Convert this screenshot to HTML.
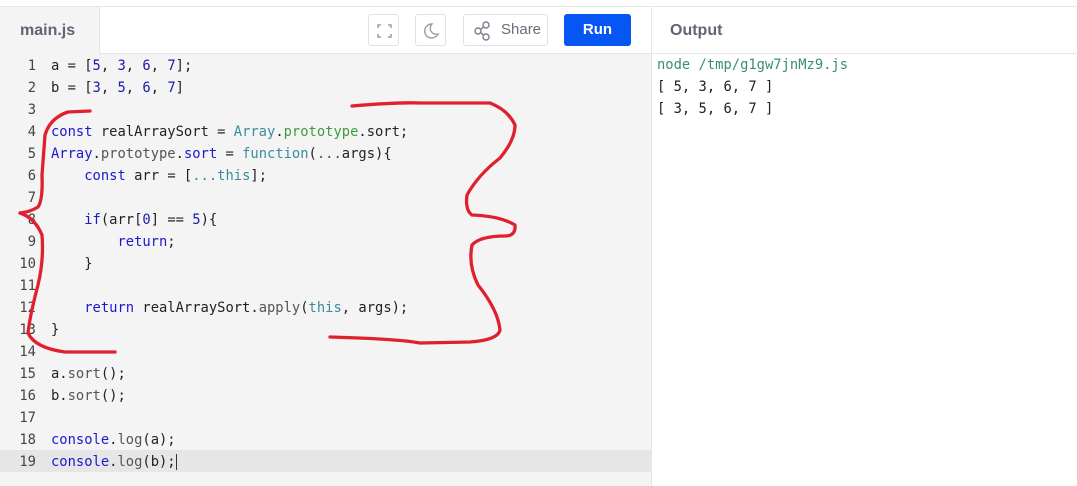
<!DOCTYPE html>
<html><head><meta charset="utf-8"><style>
*{margin:0;padding:0;box-sizing:border-box}
body{width:1077px;height:486px;overflow:hidden;background:#fff;font-family:"Liberation Sans",sans-serif;position:relative}
.top{position:absolute;left:0;top:6px;width:1077px;height:1px;background:#e4e6ec}
.tab{position:absolute;left:0;top:7px;width:99px;height:479px;background:#f4f4f4}
.tab span{position:absolute;left:20px;top:15px;font-size:16px;font-weight:bold;color:#606474}
.tb{position:absolute;left:99px;top:7px;width:552px;height:47px;background:#fff;border-left:1px solid #e4e6ec;border-bottom:1px solid #e4e6ec}
.editor{position:absolute;left:0;top:54px;width:651px;height:432px;background:#f4f4f4}
.div{position:absolute;left:651px;top:7px;width:1px;height:479px;background:#e4e6ec}
.outh{position:absolute;left:652px;top:7px;width:425px;height:47px;border-bottom:1px solid #e4e6ec}
.outh span{position:absolute;left:18px;top:15px;font-size:16px;font-weight:bold;color:#606474}
.btn{position:absolute;top:14px;height:32px;border:1px solid #dfe1e6;border-radius:3px;background:#fff}
.run{position:absolute;left:564px;top:14px;width:67px;height:32px;background:#0556f3;border-radius:3px;color:#fff;font-weight:bold;font-size:15px;text-align:center;line-height:32px}
.code{position:absolute;left:0;top:55px;font-family:"DejaVu Sans Mono","Liberation Mono",monospace;font-size:13.8px;line-height:22px;color:#222}
.ln{position:absolute;left:0;width:36px;text-align:right;color:#444}
.cl{position:absolute;left:51px;white-space:pre}
.k{color:#1a1acc}.n{color:#1a1aa6}.t{color:#3a8c9c}.g{color:#3c9c3c}.p{color:#555}
.hl{position:absolute;left:0;top:450px;width:651px;height:22px;background:#e6e6e6}
.out{position:absolute;left:657px;top:54px;font-family:"DejaVu Sans Mono","Liberation Mono",monospace;font-size:13.8px;line-height:22px;color:#222;white-space:pre}
</style></head><body>
<div class="top"></div>
<div class="tab"><span>main.js</span></div>
<div class="editor"></div>
<div class="hl"></div>
<div class="tb"></div>
<div class="div"></div>
<div class="outh"><span>Output</span></div>
<div class="btn" style="left:368px;width:31px"><svg width="31" height="32" viewBox="0 0 31 32"><path d="M9 13v-3h3M19 10h3v3M22 19v3h-3M12 22h-3v-3" fill="none" stroke="#9a9ea8" stroke-width="1.5"/></svg></div>
<div class="btn" style="left:415px;width:31px"><svg width="31" height="32" viewBox="0 0 31 32"><path d="M16 9a7 7 0 1 0 6 10a6 6 0 0 1-6-10z" fill="none" stroke="#9a9ea8" stroke-width="1.4"/></svg></div>
<div class="btn" style="left:463px;width:85px"><svg width="30" height="32" viewBox="0 0 30 32" style="position:absolute;left:4px;top:0"><circle cx="10" cy="16" r="3" fill="none" stroke="#7a7e8a" stroke-width="1.4"/><circle cx="18" cy="10" r="3" fill="none" stroke="#7a7e8a" stroke-width="1.4"/><circle cx="18" cy="22" r="3" fill="none" stroke="#7a7e8a" stroke-width="1.4"/><path d="M12.5 14.5l3-2.5M12.5 17.5l3 2.5" stroke="#7a7e8a" stroke-width="1.4"/></svg><span style="position:absolute;left:37px;top:6px;font-size:15px;color:#6a6e7a">Share</span></div>
<div class="run">Run</div>
<div class="code">
<div class="ln" style="top:0">1</div><div class="cl" style="top:0">a = [<span class="n">5</span>, <span class="n">3</span>, <span class="n">6</span>, <span class="n">7</span>];</div>
<div class="ln" style="top:22px">2</div><div class="cl" style="top:22px">b = [<span class="n">3</span>, <span class="n">5</span>, <span class="n">6</span>, <span class="n">7</span>]</div>
<div class="ln" style="top:44px">3</div>
<div class="ln" style="top:66px">4</div><div class="cl" style="top:66px"><span class="k">const</span> realArraySort = <span class="t">Array</span>.<span class="g">prototype</span>.sort;</div>
<div class="ln" style="top:88px">5</div><div class="cl" style="top:88px"><span class="k">Array</span>.<span class="p">prototype</span>.<span class="k">sort</span> = <span class="t">function</span>(<span class="p">...</span>args){</div>
<div class="ln" style="top:110px">6</div><div class="cl" style="top:110px">    <span class="k">const</span> arr = [<span class="t">...this</span>];</div>
<div class="ln" style="top:132px">7</div>
<div class="ln" style="top:154px">8</div><div class="cl" style="top:154px">    <span class="k">if</span>(arr[<span class="n">0</span>] == <span class="n">5</span>){</div>
<div class="ln" style="top:176px">9</div><div class="cl" style="top:176px">        <span class="k">return</span>;</div>
<div class="ln" style="top:198px">10</div><div class="cl" style="top:198px">    }</div>
<div class="ln" style="top:220px">11</div>
<div class="ln" style="top:242px">12</div><div class="cl" style="top:242px">    <span class="k">return</span> realArraySort.<span class="p">apply</span>(<span class="t">this</span>, args);</div>
<div class="ln" style="top:264px">13</div><div class="cl" style="top:264px">}</div>
<div class="ln" style="top:286px">14</div>
<div class="ln" style="top:308px">15</div><div class="cl" style="top:308px">a.<span class="p">sort</span>();</div>
<div class="ln" style="top:330px">16</div><div class="cl" style="top:330px">b.<span class="p">sort</span>();</div>
<div class="ln" style="top:352px">17</div>
<div class="ln" style="top:374px">18</div><div class="cl" style="top:374px"><span class="k">console</span>.<span class="p">log</span>(a);</div>
<div class="ln" style="top:396px">19</div><div class="cl" style="top:396px"><span class="k">console</span>.<span class="p">log</span>(b);<span style="border-left:1px solid #333"></span></div>
</div>
<div class="out"><span style="color:#3a8c7c">node /tmp/g1gw7jnMz9.js</span>
[ 5, 3, 6, 7 ]
[ 3, 5, 6, 7 ]</div>
<svg width="1077" height="486" style="position:absolute;left:0;top:0" fill="none" stroke="#e0202c" stroke-width="3.3" stroke-linecap="round" stroke-linejoin="round">
<path d="M90 111 L68 112 Q50 118 45 135 L42 175 Q43 200 38 207 Q30 212 20 213"/>
<path d="M20 213 Q35 218 42 235 Q44 260 38 285 Q30 315 28 333 Q35 348 65 352 L115 352"/>
<path d="M352 106 Q400 102 420 103 L490 103 Q508 110 515 125 Q515 140 500 158 Q478 175 467 195 Q465 210 472 215 Q500 216 515 225 Q516 236 505 236 Q480 236 472 245 Q468 265 478 285 Q498 310 500 330 Q498 340 470 342 L420 343 Q400 339 330 337"/>
</svg>
</body></html>
